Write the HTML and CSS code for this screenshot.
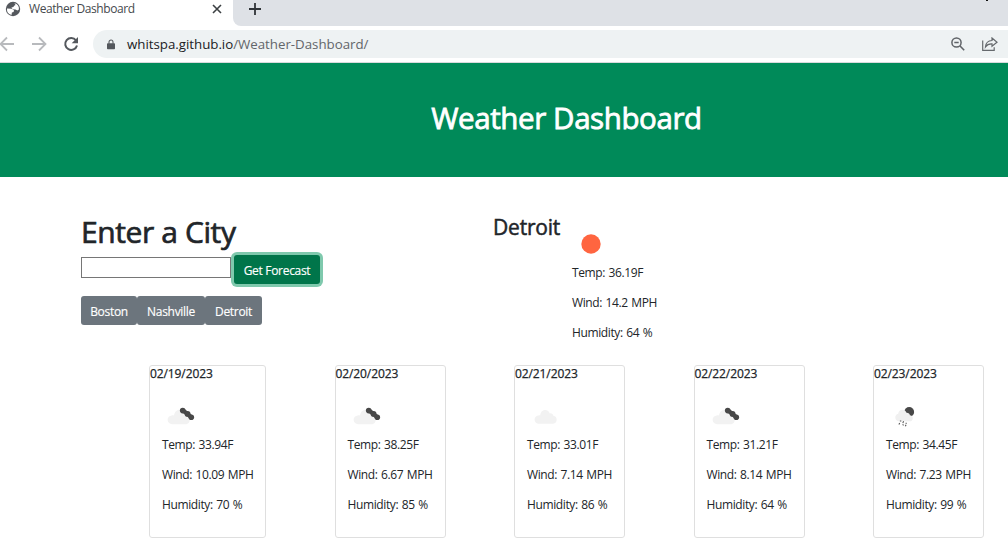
FILE: index.html
```html
<!DOCTYPE html>
<html lang="en">
<head>
<meta charset="utf-8">
<title>Weather Dashboard</title>
<link rel="stylesheet" href="styles.css">
</head>
<body>
<svg class="defs" width="0" height="0">
  <symbol id="broken-clouds" viewBox="0 0 38 38">
    <path fill="#f2f2f2" d="M10.300 26.200a4.400 4.400 0 0 1-.5-8.800c.8-.2 1.700-.1 2.300.1.200-3.400 2.600-5.700 5.400-5.700 2.500 0 4.300 1.500 4.900 3.700l3.600 3.500a4 4 0 0 1-1.500 7.200z"/>
    <path stroke="#484848" stroke-width="4.200" d="M21 12.300l8.500 7"/>
    <g fill="#484848"><circle cx="20.700" cy="12.600" r="2.800"/><circle cx="25.600" cy="15.900" r="2.900"/><circle cx="29.300" cy="19.200" r="2.800"/></g>
  </symbol>
  <symbol id="scattered-clouds" viewBox="0 0 38 38">
    <path fill="#f2f2f2" d="M11.900 25.800a4.200 4.200 0 0 1-.3-8.400c.6-.1 1.100-.1 1.600.1.100-3.200 2.100-5.600 4.800-5.600 2.500 0 4.100 1.500 4.700 3.500 2-.3 3.400.9 3.600 2.300a4.100 4.100 0 0 1-.2 8.100z"/>
  </symbol>
  <symbol id="rain" viewBox="0 0 38 38">
    <circle cx="23.200" cy="13.900" r="4.900" fill="#484848"/>
    <path fill="#f0f0f0" d="M12.500 23.300a3.900 3.900 0 0 1-.3-7.600c.3-2.500 2-4 4.100-4 2 0 3.500 1.100 4.200 3 2-.1 3.300 1 3.400 2.500 3.400 0 3.900 4.700 1 6.100z"/>
    <path stroke="#585858" stroke-width="1.100" fill="none" d="M13.900 23h1.400M17.600 23.200l-.8 1.900M20.400 24.700l-.5 1.200M13.700 25l-.8 1.600M16.600 26.300l1 1M20 26.700l-.6 1.500"/>
  </symbol>
</svg>

<div class="browser">
  <div class="tabstrip">
    <div class="tab">
      <svg class="favicon" viewBox="0 0 16 16"><circle cx="8" cy="8" r="7.200" fill="#54585d"/><path fill="#fff" d="M2 7.600l4.600.1 2.400 1.600-.4 1.800-1.700.3-.4 2.600A6 6 0 0 1 2 7.600zM9.400 2.200A6 6 0 0 1 13.900 8.600l-1.500.9-1.900-1-2.900-.3-1.200-1.700 2-.5.700-1.300 1.500-.6z"/></svg>
      <span class="tab-title">Weather Dashboard</span>
      <svg class="tab-close" viewBox="0 0 10 10"><path d="M1 1l8 8M9 1 1 9" stroke="#3c4043" stroke-width="1.600"/></svg>
    </div>
    <div class="strip-rest">
      <svg class="plus" viewBox="0 0 12 12"><path d="M6 0v12M0 6h12" stroke="#303438" stroke-width="1.800"/></svg>
      <span class="speck"></span>
    </div>
  </div>
  <div class="toolbar">
    <svg class="nav" viewBox="0 0 16 16"><path d="M15 8H2M8 1.500 1.500 8 8 14.500" fill="none" stroke="#b8babd" stroke-width="1.800"/></svg>
    <svg class="nav" viewBox="0 0 16 16"><path d="M1 8h13M8 1.500 14.500 8 8 14.500" fill="none" stroke="#b8babd" stroke-width="1.800"/></svg>
    <svg class="nav" viewBox="0 0 16 16"><path d="M13 4.300A6 6 0 1 0 14 9.500" fill="none" stroke="#54585d" stroke-width="2"/><path d="M15 1v6.300H8.700z" fill="#54585d"/></svg>
    <div class="omnibox">
      <svg class="lock" viewBox="0 0 10 12"><path d="M1 4.500h8q1 0 1 1V11q0 1-1 1H1q-1 0-1-1V5.500q0-1 1-1z" fill="#54585d"/><path d="M2.500 5V3a2.500 2.500 0 0 1 5 0v2" fill="none" stroke="#54585d" stroke-width="1.300"/></svg>
      <span class="url">whitspa.github.io<span class="path">/Weather-Dashboard/</span></span>
      <svg class="lens" viewBox="0 0 14 14"><circle cx="5.500" cy="5.500" r="4.600" fill="none" stroke="#606468" stroke-width="1.500"/><path d="M3.300 5.500h4.400M8.800 8.800l4.400 4.400" stroke="#606468" stroke-width="1.600"/></svg>
      <svg class="share" viewBox="0 0 16 14"><path d="M.7 3.500v9.800h11.500v-3M10 1l5 4.200-5 4V6.800C7 6.600 5 7.600 3.500 9.800 3.800 6 6.200 3.700 10 3.500z" fill="none" stroke="#65696d" stroke-width="1.200"/></svg>
    </div>
  </div>
</div>

<header class="hero"><h1 class="hero-title">Weather Dashboard</h1></header>

<main>
  <section class="top">
    <div class="search">
      <h1 class="search-title">Enter a City</h1>
      <div class="search-row">
        <input class="city-input" type="text" aria-label="City">
        <button class="btn go">Get Forecast</button>
      </div>
      <div class="history">
        <button class="btn past b1">Boston</button><button class="btn past b2">Nashville</button><button class="btn past b3">Detroit</button>
      </div>
    </div>
    <h2 class="city">Detroit</h2>
    <div class="current">
      <svg class="sun" viewBox="0 0 38 38"><circle cx="19" cy="19" r="9.700" fill="#ff6540"/></svg>
      <p>Temp: 36.19F</p>
      <p>Wind: 14.2 MPH</p>
      <p>Humidity: 64 %</p>
    </div>
  </section>

  <section class="forecast">
    <article class="card wide">
      <h5 class="date">02/19/2023</h5>
      <div class="body"><svg class="icon"><use href="#broken-clouds"/></svg><p>Temp: 33.94F</p><p>Wind: 10.09 MPH</p><p>Humidity: 70 %</p></div>
    </article>
    <article class="card">
      <h5 class="date">02/20/2023</h5>
      <div class="body"><svg class="icon"><use href="#broken-clouds"/></svg><p>Temp: 38.25F</p><p>Wind: 6.67 MPH</p><p>Humidity: 85 %</p></div>
    </article>
    <article class="card">
      <h5 class="date">02/21/2023</h5>
      <div class="body"><svg class="icon"><use href="#scattered-clouds"/></svg><p>Temp: 33.01F</p><p>Wind: 7.14 MPH</p><p>Humidity: 86 %</p></div>
    </article>
    <article class="card">
      <h5 class="date">02/22/2023</h5>
      <div class="body"><svg class="icon"><use href="#broken-clouds"/></svg><p>Temp: 31.21F</p><p>Wind: 8.14 MPH</p><p>Humidity: 64 %</p></div>
    </article>
    <article class="card">
      <h5 class="date">02/23/2023</h5>
      <div class="body"><svg class="icon"><use href="#rain"/></svg><p>Temp: 34.45F</p><p>Wind: 7.23 MPH</p><p>Humidity: 99 %</p></div>
    </article>
  </section>
</main>
</body>
</html>
```
FILE: styles.css
```css
* { box-sizing: border-box; }
body { margin: 0; width: 1008px; height: 559px; overflow: hidden; background: #fff; color: #212529; font: 12px/18px "Open Sans", "Noto Sans", sans-serif; }
h1, h2, h5, p { margin: 0; }
svg { display: block; flex: none; }
.defs { display: none; }

.browser { height: 63px; background: #fff; border-bottom: 1px solid #d8dadd; }
.tabstrip { display: flex; height: 26px; background: #fff; }
.tab { display: flex; width: 233px; height: 18px; align-items: center; padding-left: 5px; }
.favicon { width: 16px; height: 16px; }
.tab-title { width: 182px; margin-left: 8px; color: #45494d; letter-spacing: -.42px; white-space: nowrap; }
.tab-close { width: 10px; height: 10px; margin-left: 1px; }
.strip-rest { display: flex; flex: 1; justify-content: space-between; padding: 3px 20px 0 16px; background: #dee1e6; border-bottom-left-radius: 8px; }
.plus { width: 12px; height: 12px; }
.speck { width: 2px; height: 1px; margin-top: -3px; background: #111; }
.toolbar { display: flex; height: 36px; align-items: center; }
.nav { width: 16px; height: 16px; margin-left: -1px; }
.nav + .nav { margin-left: 16px; }
.omnibox { display: flex; flex: 1; height: 28px; align-items: center; margin-left: 14px; padding-left: 14px; background: #eef2f3; border-radius: 14px 0 0 14px; }
.lock { width: 8px; height: 11px; }
.url { flex: 1; margin-left: 12px; color: #202124; font-size: 13.300px; letter-spacing: -.02px; white-space: nowrap; }
.path { color: #62666a; }
.lens { width: 14px; height: 14px; margin-right: 17px; }
.share { width: 16px; height: 14px; margin-right: 10px; }

.hero { height: 114px; padding: 37px 0 0 125px; background: #008a59; color: #fff; text-align: center; }
.hero-title { font-size: 29.500px; font-weight: 400; line-height: 36px; letter-spacing: -.4px; -webkit-text-stroke: .8px; }

.top { display: flex; height: 188px; padding-left: 81px; }
.search { width: 412px; padding-top: 37px; }
.search-title { font-size: 30px; font-weight: 400; line-height: 36px; letter-spacing: -.4px; -webkit-text-stroke: .7px; }
.search-row { display: flex; height: 32px; margin-top: 5px; gap: 3px; }
.city-input { width: 150px; height: 21px; margin-top: 2px; padding: 1px; background: #fff; border: 1px solid #767676; outline: 0; }
.btn { height: 29px; padding: 3px 0 0; border: 0; border-radius: 3px; background: #6c757d; color: #fff; font: inherit; letter-spacing: -.3px; text-align: center; white-space: nowrap; -webkit-text-stroke: .15px; }
.go { width: 86px; background: #00754a; box-shadow: 0 0 0 3px #7fc9ad; }
.history { display: flex; margin-top: 9px; }
.b1 { width: 56px; }
.b2 { width: 68px; }
.b3 { width: 57px; }
.city { width: 79px; padding-top: 37px; font-size: 21px; font-weight: 400; line-height: 26px; letter-spacing: -.2px; -webkit-text-stroke: .5px; }
.current { padding-top: 48px; }
.sun { width: 38px; height: 38px; margin-bottom: 1px; }
p { height: 18px; margin-bottom: 12px; letter-spacing: -.38px; word-spacing: .8px; white-space: nowrap; }

.forecast { display: flex; justify-content: space-between; padding: 0 24px 0 149px; }
.card { width: 111px; height: 173px; border: 1px solid #dfdfdf; border-radius: 3px; }
.wide { width: 117px; }
.date { height: 17px; font-size: 12px; font-weight: 400; line-height: 16px; letter-spacing: -.1px; -webkit-text-stroke: .25px; }
.body { padding: 15px 12px 0; }
.icon { width: 38px; height: 38px; }
```
